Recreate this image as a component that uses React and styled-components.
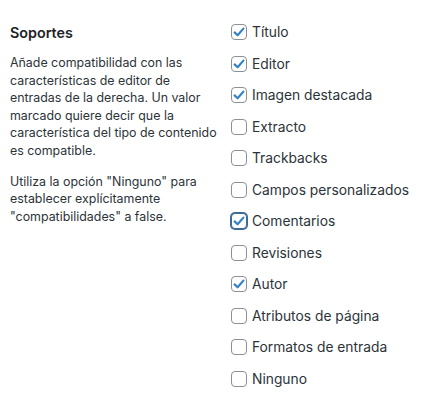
import React from "react";
import styled, { createGlobalStyle } from "styled-components";

const GlobalStyle = createGlobalStyle`
  html, body {
    margin: 0;
    padding: 0;
    background: #ffffff;
  }
  body {
    font-family: Inter, "Noto Sans", "Liberation Sans", sans-serif;
    color: #1d2327;
  }
`;

const supports = [
  { label: "Título", checked: true },
  { label: "Editor", checked: true },
  { label: "Imagen destacada", checked: true },
  { label: "Extracto" },
  { label: "Trackbacks" },
  { label: "Campos personalizados" },
  { label: "Comentarios", checked: true, focused: true },
  { label: "Revisiones" },
  { label: "Autor", checked: true },
  { label: "Atributos de página" },
  { label: "Formatos de entrada" },
  { label: "Ninguno" },
];

const Check = () => (
  <svg width="14" height="14" viewBox="0 0 14 14" aria-hidden="true">
    <path
      d="M2.6 7.4 L5.6 10.3 L11.4 3.6"
      fill="none"
      stroke="#3582c4"
      strokeWidth="2.2"
      strokeLinecap="round"
      strokeLinejoin="round"
    />
  </svg>
);

const App = () => {
  return (
    <>
      <GlobalStyle />
      <Section>
        <Info>
          <Heading>Soportes</Heading>
          <Text>
            Añade compatibilidad con las características de editor de entradas
            de la derecha. Un valor marcado quiere decir que la característica
            del tipo de contenido es compatible.
          </Text>
          <Text>
            Utiliza la opción "Ninguno" para establecer explícitamente
            "compatibilidades" a false.
          </Text>
        </Info>
        <List>
          {supports.map((item) => (
            <Option key={item.label}>
              <Box $focused={item.focused}>{item.checked && <Check />}</Box>
              {item.label}
            </Option>
          ))}
        </List>
      </Section>
    </>
  );
};

export default App;

const Section = styled.div`
  display: flex;
  padding: 24px 0 0 10px;
`;

const Info = styled.div`
  width: 212px;
  margin-right: 9px;
  flex-shrink: 0;
`;

const Heading = styled.h2`
  margin: 0 0 13px;
  font-size: 14.3px;
  font-weight: 600;
  line-height: 17px;
  color: #1d2327;
`;

const Text = styled.p`
  margin: 0 0 13px;
  font-size: 12.4px;
  line-height: 17.6px;
  color: #2c3338;
`;

const List = styled.div`
  display: flex;
  flex-direction: column;
  gap: 15.55px;
`;

const Option = styled.label`
  display: flex;
  align-items: center;
  gap: 5px;
  height: 16px;
  font-size: 13.8px;
  color: #2c3338;
  white-space: nowrap;
`;

const Box = styled.span`
  box-sizing: border-box;
  width: 16px;
  height: 16px;
  flex-shrink: 0;
  display: flex;
  align-items: center;
  justify-content: center;
  border-radius: 4px;
  border: 1px solid ${({ $focused }) => ($focused ? "#3d6a96" : "#8c8f94")};
  box-shadow: ${({ $focused }) => ($focused ? "0 0 0 1px #3d6a96" : "none")};
  background: #ffffff;
`;
